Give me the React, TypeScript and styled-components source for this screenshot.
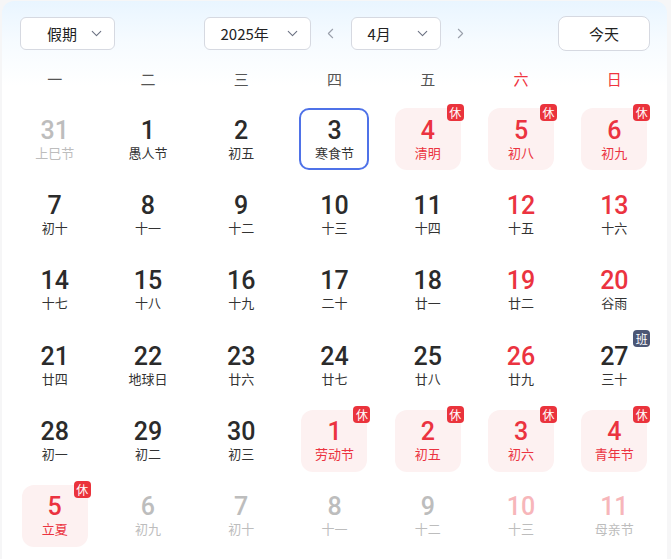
import React from "react";
import styled, { createGlobalStyle, css } from "styled-components";
import { ChevronDown, ChevronLeft, ChevronRight } from "lucide-react";

const Global = createGlobalStyle`
  html, body { margin: 0; padding: 0; background: #f6f6f7; }
  body { font-family: Roboto, "Noto Sans CJK SC", sans-serif; }
`;

const Card = styled.div`
  margin: 1px 4px 0 2px;
  min-height: 570px;
  border-radius: 12px 12px 0 0;
  background: linear-gradient(180deg, #e9f5ff 0px, #f6fbff 40px, #ffffff 85px);
  padding: 15px 6px 0 6px;
  box-sizing: border-box;
`;

const Header = styled.div`
  display: grid;
  grid-template-columns: 1fr auto 1fr;
  align-items: center;
  padding: 0 11px 0 12px;
  height: 35px;
`;

const Center = styled.div`
  display: flex;
  align-items: center;
  margin-left: 14px;
`;

const Select = styled.div<{ $w: number; $center?: boolean }>`
  box-sizing: border-box;
  width: ${(p) => p.$w}px;
  height: 33px;
  border: 1px solid #d6d9e1;
  border-radius: 6px;
  background: #fff;
  display: flex;
  align-items: center;
  justify-content: space-between;
  padding: 0 9px 0 ${(p) => (p.$center ? 26 : 16)}px;
  font-family: "Noto Sans CJK SC", sans-serif;
  font-size: 15px;
  color: #222;
  svg { color: #6b7182; }
`;

const Arrow = styled.div`
  width: 40px;
  display: flex;
  justify-content: center;
  color: #9aa0ab;
`;

const TodayBtn = styled.button`
  justify-self: end;
  box-sizing: border-box;
  width: 92px;
  height: 35px;
  border: 1px solid #d6d9e1;
  border-radius: 8px;
  background: #fff;
  font-family: "Noto Sans CJK SC", sans-serif;
  font-size: 15px;
  color: #222;
  padding: 0;
`;

const WeekRow = styled.div`
  display: grid;
  grid-template-columns: repeat(7, 1fr);
  margin-top: 12px;
  height: 30px;
  align-items: center;
`;

const WeekLabel = styled.div<{ $red?: boolean }>`
  text-align: center;
  font-family: "Noto Sans CJK SC", sans-serif;
  font-size: 15px;
  color: ${(p) => (p.$red ? "#f0353f" : "#555")};
`;

const Grid = styled.div`
  display: grid;
  grid-template-columns: repeat(7, 1fr);
  row-gap: 13.4px;
  margin-top: 15px;
`;

type Kind = "normal" | "other" | "today" | "holiday";

const Cell = styled.div<{ $kind: Kind }>`
  position: relative;
  justify-self: center;
  box-sizing: border-box;
  width: 66px;
  height: 62px;
  border-radius: 12px;
  display: flex;
  flex-direction: column;
  align-items: center;
  justify-content: center;
  ${(p) =>
    p.$kind === "holiday" &&
    css`
      background: #fdf1f1;
    `}
  ${(p) =>
    p.$kind === "today" &&
    css`
      width: 70px;
      border: 2px solid #4f72e8;
      border-radius: 10px;
    `}
`;

const Num = styled.div<{ $color: string }>`
  font-family: Roboto, sans-serif;
  font-size: 25px;
  font-weight: 500;
  line-height: 25px;
  color: ${(p) => p.$color};
`;

const Lunar = styled.div<{ $color: string }>`
  font-family: "Noto Sans CJK SC", sans-serif;
  font-size: 13px;
  line-height: 17px;
  margin-top: 1px;
  color: ${(p) => p.$color};
`;

const Badge = styled.div<{ $work?: boolean }>`
  position: absolute;
  top: -4px;
  right: -3px;
  width: 17px;
  height: 17px;
  border-radius: 4px;
  background: ${(p) => (p.$work ? "#4b5675" : "#ea333c")};
  color: #fff;
  font-family: "Noto Sans CJK SC", sans-serif;
  font-size: 12px;
  line-height: 17px;
  text-align: center;
`;

type Day = {
  d: number;
  l: string;
  k?: Kind;
  red?: boolean;
  badge?: "休" | "班";
};

const days: Day[] = [
  { d: 31, l: "上巳节", k: "other" },
  { d: 1, l: "愚人节" },
  { d: 2, l: "初五" },
  { d: 3, l: "寒食节", k: "today" },
  { d: 4, l: "清明", k: "holiday", badge: "休" },
  { d: 5, l: "初八", k: "holiday", badge: "休" },
  { d: 6, l: "初九", k: "holiday", badge: "休" },
  { d: 7, l: "初十" },
  { d: 8, l: "十一" },
  { d: 9, l: "十二" },
  { d: 10, l: "十三" },
  { d: 11, l: "十四" },
  { d: 12, l: "十五", red: true },
  { d: 13, l: "十六", red: true },
  { d: 14, l: "十七" },
  { d: 15, l: "十八" },
  { d: 16, l: "十九" },
  { d: 17, l: "二十" },
  { d: 18, l: "廿一" },
  { d: 19, l: "廿二", red: true },
  { d: 20, l: "谷雨", red: true },
  { d: 21, l: "廿四" },
  { d: 22, l: "地球日" },
  { d: 23, l: "廿六" },
  { d: 24, l: "廿七" },
  { d: 25, l: "廿八" },
  { d: 26, l: "廿九", red: true },
  { d: 27, l: "三十", badge: "班" },
  { d: 28, l: "初一" },
  { d: 29, l: "初二" },
  { d: 30, l: "初三" },
  { d: 1, l: "劳动节", k: "holiday", badge: "休" },
  { d: 2, l: "初五", k: "holiday", badge: "休" },
  { d: 3, l: "初六", k: "holiday", badge: "休" },
  { d: 4, l: "青年节", k: "holiday", badge: "休" },
  { d: 5, l: "立夏", k: "holiday", badge: "休" },
  { d: 6, l: "初九", k: "other" },
  { d: 7, l: "初十", k: "other" },
  { d: 8, l: "十一", k: "other" },
  { d: 9, l: "十二", k: "other" },
  { d: 10, l: "十三", k: "other", red: true },
  { d: 11, l: "母亲节", k: "other", red: true },
];

const weekdays = ["一", "二", "三", "四", "五", "六", "日"];

function colors(day: Day): [string, string] {
  const k = day.k ?? "normal";
  if (k === "holiday") return ["#eb3340", "#eb3340"];
  if (k === "other") return [day.red ? "#f7b6ba" : "#bdbdbd", "#bdbdbd"];
  if (day.red) return ["#eb3340", "#333"];
  return ["#2b2b2b", "#333"];
}

export default function App() {
  return (
    <>
      <Global />
      <Card>
        <Header>
          <Select $w={95} $center>
            <span>假期</span>
            <ChevronDown size={17} strokeWidth={1.5} />
          </Select>
          <Center>
            <Select $w={107}>
              <span>2025年</span>
              <ChevronDown size={17} strokeWidth={1.5} />
            </Select>
            <Arrow>
              <ChevronLeft size={17} strokeWidth={1.5} />
            </Arrow>
            <Select $w={90}>
              <span>4月</span>
              <ChevronDown size={17} strokeWidth={1.5} />
            </Select>
            <Arrow>
              <ChevronRight size={17} strokeWidth={1.5} />
            </Arrow>
          </Center>
          <TodayBtn>今天</TodayBtn>
        </Header>
        <WeekRow>
          {weekdays.map((w, i) => (
            <WeekLabel key={w} $red={i >= 5}>
              {w}
            </WeekLabel>
          ))}
        </WeekRow>
        <Grid>
          {days.map((day, i) => {
            const [nc, lc] = colors(day);
            return (
              <Cell key={i} $kind={day.k ?? "normal"}>
                <Num $color={nc}>{day.d}</Num>
                <Lunar $color={lc}>{day.l}</Lunar>
                {day.badge && <Badge $work={day.badge === "班"}>{day.badge}</Badge>}
              </Cell>
            );
          })}
        </Grid>
      </Card>
    </>
  );
}
